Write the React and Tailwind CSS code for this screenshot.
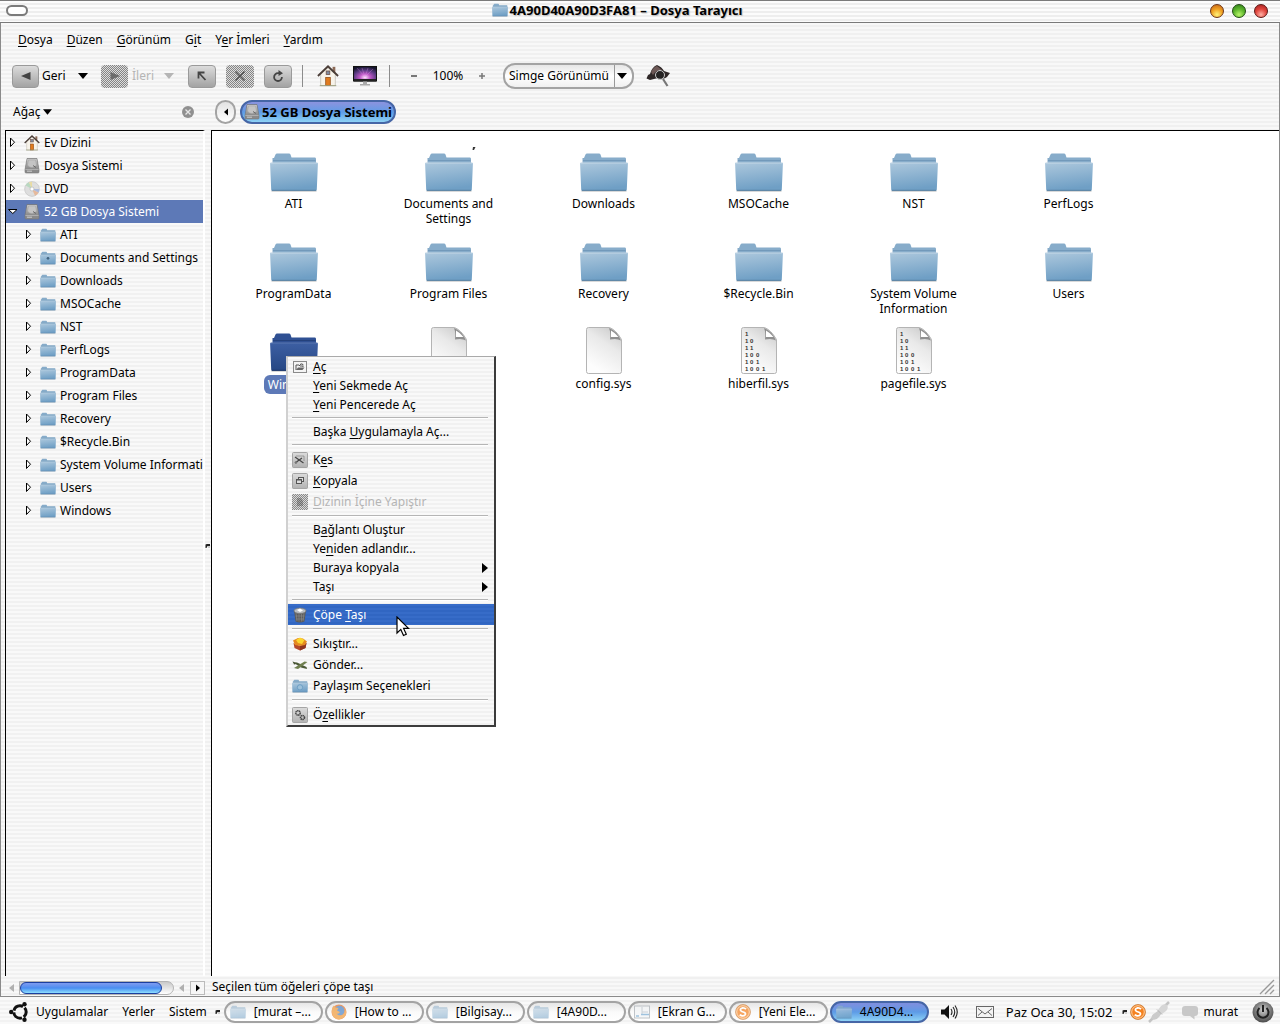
import React, { useState } from "react";

const tree = [
  { name: "Ev Dizini", icon: "home" },
  { name: "Dosya Sistemi", icon: "drive" },
  { name: "DVD", icon: "disc" },
  { name: "52 GB Dosya Sistemi", icon: "drive", open: true },
];

const children = [
  "ATI",
  "Documents and Settings",
  "Downloads",
  "MSOCache",
  "NST",
  "PerfLogs",
  "ProgramData",
  "Program Files",
  "Recovery",
  "$Recycle.Bin",
  "System Volume Information",
  "Users",
  "Windows",
];

const files = [
  { name: "ATI", type: "folder" },
  { name: "Documents and Settings", type: "folder" },
  { name: "Downloads", type: "folder" },
  { name: "MSOCache", type: "folder" },
  { name: "NST", type: "folder" },
  { name: "PerfLogs", type: "folder" },
  { name: "ProgramData", type: "folder" },
  { name: "Program Files", type: "folder" },
  { name: "Recovery", type: "folder" },
  { name: "$Recycle.Bin", type: "folder" },
  { name: "System Volume Information", type: "folder" },
  { name: "Users", type: "folder" },
  { name: "Windows", type: "folder", selected: true },
  { name: "", type: "file" },
  { name: "config.sys", type: "file" },
  { name: "hiberfil.sys", type: "binary" },
  { name: "pagefile.sys", type: "binary" },
];

// "_" marks the letter that gets the underline
const contextMenu = [
  { label: "_Aç", icon: "open", short: true },
  { label: "_Yeni Sekmede Aç", short: true },
  { label: "_Yeni Pencerede Aç", short: true },
  null,
  { label: "Başka _Uygulamayla Aç...", short: true },
  null,
  { label: "K_es", icon: "cut" },
  { label: "_Kopyala", icon: "copy" },
  { label: "_Dizinin İçine Yapıştır", icon: "paste", disabled: true },
  null,
  { label: "B_ağlantı Oluştur", short: true },
  { label: "Ye_niden adlandır...", short: true },
  { label: "Buraya kopyala", short: true, submenu: true },
  { label: "Taşı", short: true, submenu: true },
  null,
  { label: "Çöpe _Taşı", icon: "trash", active: true },
  null,
  { label: "Sıkıştır...", icon: "box" },
  { label: "Gönder...", icon: "plane" },
  { label: "Paylaşım Seçenekleri", icon: "share" },
  null,
  { label: "Ö_zellikler", icon: "gears" },
];

const tasks = [
  { label: "[murat –...", icon: "folder" },
  { label: "[How to ...", icon: "firefox" },
  { label: "[Bilgisay...", icon: "folder" },
  { label: "[4A90D...", icon: "folder" },
  { label: "[Ekran G...", icon: "shot" },
  { label: "[Yeni Ele...", icon: "s" },
  { label: "4A90D4...", icon: "folder", active: true },
];

const Mnemonic = ({ text }) => {
  const i = text.indexOf("_");
  if (i < 0) return <span>{text}</span>;
  return (
    <span>
      {text.slice(0, i)}
      <span className="underline underline-offset-2">{text[i + 1]}</span>
      {text.slice(i + 2)}
    </span>
  );
};

const Gradients = () => (
  <svg className="absolute w-0 h-0" aria-hidden="true">
    <defs>
      <linearGradient id="front" x1="0" y1="0" x2="0.2" y2="1">
        <stop offset="0" stopColor="#adc8dd" />
        <stop offset="1" stopColor="#6f9fc5" />
      </linearGradient>
      <linearGradient id="frontDark" x1="0" y1="0" x2="0" y2="1">
        <stop offset="0" stopColor="#3d5fa3" />
        <stop offset="1" stopColor="#264784" />
      </linearGradient>
      <linearGradient id="page" x1="1" y1="0" x2="0.5" y2="1">
        <stop offset="0" stopColor="#c4c4c4" />
        <stop offset="0.45" stopColor="#e9e9e9" />
        <stop offset="1" stopColor="#fdfdfd" />
      </linearGradient>
      <linearGradient id="metal" x1="0" y1="0" x2="0" y2="1">
        <stop offset="0" stopColor="#c9c9c9" />
        <stop offset="1" stopColor="#8a8a8a" />
      </linearGradient>
      <radialGradient id="aurora" cx="0.5" cy="0.75" r="0.75">
        <stop offset="0" stopColor="#ffe3ff" />
        <stop offset="0.3" stopColor="#c159c8" />
        <stop offset="0.65" stopColor="#5b3a83" />
        <stop offset="1" stopColor="#15142c" />
      </radialGradient>
      <radialGradient id="power" cx="0.5" cy="0.4" r="0.6">
        <stop offset="0" stopColor="#d0d0d0" />
        <stop offset="0.6" stopColor="#7e7e7e" />
        <stop offset="1" stopColor="#4a4a4a" />
      </radialGradient>
    </defs>
  </svg>
);

const Folder = ({ className, dark, viewBox = "0 0 48 48", children }) => (
  <svg className={className} viewBox={viewBox} preserveAspectRatio="none" aria-hidden="true">
    <path d="M1.5 43.5H46.5V45H1.5Z" fill="#000" opacity="0.15" />
    <path
      d="M2.5 18V11H4L5.5 7.5Q6 6.5 7 6.5H19Q20 6.5 20.5 7.5L21.5 10.5H45Q46 10.5 46 12V18Z"
      fill={dark ? "#2f5093" : "#87acca"}
    />
    <path d="M3 13.5H45.5" stroke={dark ? "#24417b" : "#7299ba"} strokeWidth="1" />
    <path
      d="M1 15.5H47Q48 15.5 47.9 17L46.8 42.5Q46.7 43.7 45.5 43.7H2.5Q1.3 43.7 1.2 42.5L0.1 17Q0 15.5 1 15.5Z"
      fill={dark ? "url(#frontDark)" : "url(#front)"}
    />
    <path d="M1 16H47" stroke="#fff" strokeWidth="1" opacity={dark ? 0.15 : 0.35} />
    <path d="M1.8 43.3H46.2" stroke={dark ? "#1b3566" : "#557d9e"} strokeWidth="1" />
    {children}
  </svg>
);

const digitRows = ["1", "10", "11", "100", "101", "1001"];

const Page = ({ binary }) => (
  <svg className="w-12 h-12" viewBox="0 0 48 48" aria-hidden="true">
    <path
      d="M6.5 2.5Q6.5 0.5 8.5 0.5H29.5Q36 3 41.5 12.5V44.5Q41.5 46.5 39.5 46.5H8.5Q6.5 46.5 6.5 44.5Z"
      fill="url(#page)"
      stroke="#b4b4b4"
    />
    <path d="M29 1Q31 6 30 12.5Q37 11 41 13.5Q37 4 29 1Z" fill="#777" opacity="0.75" />
    <path d="M31 3.5V10H38.5Q35.5 6 31 3.5Z" fill="#fff" />
    {binary && (
      <g fontFamily="Liberation Sans, sans-serif" fontWeight="700" fontSize="6" fill="#333">
        {digitRows.map((row, i) => (
          <text key={i} x="10 15 21 27" y={9 + i * 7}>
            {row}
          </text>
        ))}
      </g>
    )}
  </svg>
);

const House = ({ className }) => (
  <svg className={className} viewBox="0 0 24 24" aria-hidden="true">
    <path d="M17 2H20V9H17Z" fill="#8c6b58" />
    <path d="M4 10L12 3L20 10V22.5H4Z" fill="#f7f3ea" stroke="#b9b2a6" strokeWidth="0.7" />
    <path d="M1 12L12 1.5L23 12" fill="none" stroke="#4a3d37" strokeWidth="2" />
    <rect x="10" y="6.5" width="4" height="4" fill="#7f8aa0" stroke="#6b4b3c" strokeWidth="0.8" />
    <rect x="9.5" y="13.5" width="5" height="9" fill="#e07b1e" stroke="#8d4a14" strokeWidth="0.8" />
    <path d="M3 22.5H21" stroke="#9aa07f" strokeWidth="1" />
  </svg>
);

const Drive = ({ className }) => (
  <svg className={className} viewBox="0 0 16 16" aria-hidden="true">
    <path d="M3 0.5H13L15 11.5V14Q15 15 14 15H2Q1 15 1 14V11.5Z" fill="#8a8a8a" stroke="#777" strokeWidth="0.6" />
    <path d="M3.3 1H12.7L14.3 11H1.7Z" fill="url(#metal)" />
    <path d="M4.5 2H11.5L12.5 7Q11 9.5 8 9.5Q5 9.5 3.5 7Z" fill="#c4c4c4" stroke="#a0a0a0" strokeWidth="0.5" />
    <path d="M9 7.5L12 9.5" stroke="#6a6a6a" strokeWidth="1" />
    <path d="M1.4 11.5H14.6" stroke="#bdbdbd" strokeWidth="0.7" />
    <path d="M3 13.2H8" stroke="#ddd" strokeWidth="0.8" />
  </svg>
);

const Disc = ({ className }) => (
  <svg className={className} viewBox="0 0 16 16" aria-hidden="true">
    <circle cx="8" cy="8" r="7.4" fill="#dedede" stroke="#c0c0c0" strokeWidth="0.6" />
    <path d="M8 8L1.5 4.5A7.3 7.3 0 0 1 5 1.3Z" fill="#b9d8c0" />
    <path d="M8 8L5 1.3A7.3 7.3 0 0 1 8 0.8Z" fill="#e9dca4" />
    <path d="M8 8L14.5 11.5A7.3 7.3 0 0 1 11 14.7Z" fill="#e6b99b" />
    <path d="M8 8L15.3 8A7.3 7.3 0 0 1 14.5 11.5Z" fill="#aab9dd" />
    <circle cx="8" cy="8" r="2" fill="#fff" stroke="#b0b0b0" strokeWidth="0.6" />
  </svg>
);

const TreeIcon = ({ type }) => {
  if (type === "home") return <House className="w-4 h-4 shrink-0" />;
  if (type === "drive") return <Drive className="w-4 h-4 shrink-0" />;
  return <Disc className="w-4 h-4 shrink-0" />;
};

const Expander = ({ open }) => (
  <svg className="w-3 h-3 shrink-0" viewBox="0 0 12 12" aria-hidden="true">
    {open ? (
      <path d="M2.5 3.500H11L6.800 7.500Z" fill="#fff" stroke="#000" strokeWidth="1" />
    ) : (
      <path d="M4.500 1V9.500L8.500 5.200Z" fill="#fff" stroke="#000" strokeWidth="1" />
    )}
  </svg>
);

const Tile = ({ children }) => (
  <>
    <rect x="0.5" y="0.5" width="15" height="15" rx="1" fill="url(#metal)" stroke="#a5a5a5" />
    <rect x="1" y="1" width="14" height="14" fill="#fff" opacity="0.35" />
    {children}
  </>
);

const MenuIcon = ({ type }) => {
  if (type === "share")
    return (
      <Folder className="w-4 h-3.5" viewBox="0 4 48 42">
        <circle cx="24" cy="29" r="8" fill="#9cc0da" stroke="#6d9fc5" strokeWidth="3" />
      </Folder>
    );
  if (type === "paste")
    return (
      <span className="relative block w-4 h-4 bg-[repeating-conic-gradient(#8a8a8a_0_25%,#d8d8d8_0_50%)] bg-[length:2px_2px]">
        <svg className="absolute inset-0 w-4 h-4" viewBox="0 0 16 16" aria-hidden="true">
          <path d="M5 4H9L11 7V12H5Z" fill="#333" opacity="0.3" />
        </svg>
      </span>
    );
  return (
    <svg className="w-4 h-4" viewBox="0 0 16 16" aria-hidden="true">
      {type === "open" && (
        <>
          <rect x="1.5" y="2.5" width="13" height="11" fill="#f4f4f4" stroke="#8a8a8a" />
          <path d="M4 11V6H7L8 7H11V8" fill="none" stroke="#555" />
          <path d="M4 11L6 8.5H12.5L10.5 11Z" fill="#666" />
          <path d="M8 5.5Q10 4 11.5 6" fill="none" stroke="#444" />
        </>
      )}
      {type === "cut" && (
        <Tile>
          <path d="M4.5 4H12V9" fill="none" stroke="#666" strokeDasharray="1 1" />
          <path d="M3 5L11.5 11M3 11L10 6" stroke="#444" strokeWidth="1.2" />
          <circle cx="4" cy="10.5" r="1.3" fill="#777" />
        </Tile>
      )}
      {type === "copy" && (
        <Tile>
          <rect x="6.5" y="4.5" width="5" height="4" fill="#ddd" stroke="#555" />
          <rect x="4.5" y="6.5" width="5" height="4" fill="#ddd" stroke="#555" />
          <path d="M4.5 7H9.5" stroke="#555" />
        </Tile>
      )}
      {type === "gears" && (
        <Tile>
          <circle cx="6" cy="6" r="2.2" fill="none" stroke="#444" strokeWidth="1.5" strokeDasharray="1.3 0.4" />
          <circle cx="10.5" cy="10.5" r="2" fill="none" stroke="#444" strokeWidth="1.6" strokeDasharray="1.3 0.4" />
        </Tile>
      )}
      {type === "trash" && (
        <>
          <path d="M2 3.5H14L12.5 14.5Q8 16.5 3.5 14.5Z" fill="#5b5b5b" />
          <path d="M4 6L5 14M7 6.5V14.5M9.5 6.5V14.5M12 6L11 14M3.5 9H12.5M4 12H12" stroke="#8f8f8f" strokeWidth="0.6" />
          <ellipse cx="8" cy="3.8" rx="6" ry="2.7" fill="#b9bdc2" stroke="#777" strokeWidth="0.8" />
          <path d="M5 3L8 1.5L11 3.5L8 5Z" fill="#fff" />
        </>
      )}
      {type === "box" && (
        <>
          <path d="M1.5 7L8 10L14.5 7L13.5 12L8 14.5L2.5 12Z" fill="#b5482a" />
          <path d="M8 10V14.5L13.5 12L14.5 7Z" fill="#8e3420" />
          <path d="M1 4.5L6 2L11 2.5L15 5.5L13 9L8 10L3 9Z" fill="#e58a1f" />
          <path d="M4 4L8 1.5L12.5 4L10 8L6 7Z" fill="#fbd52f" />
        </>
      )}
      {type === "plane" && (
        <>
          <path d="M0.5 5L5 5.5L14.5 10L15 12L9 10.5Z" fill="#4c5a37" />
          <path d="M2 11L12.5 4.5L15.5 5L6 12Z" fill="#6f7f4e" />
          <path d="M0.5 4L4 7L2 7.5Z" fill="#3f4b2e" />
        </>
      )}
    </svg>
  );
};

const SMark = () => (
  <>
    <circle cx="8" cy="8" r="7.5" fill="#f58220" stroke="#b86a24" strokeWidth="0.6" />
    <circle cx="8" cy="8" r="6.3" fill="none" stroke="#ffe2c0" strokeWidth="0.8" />
    <path
      d="M11 5.2Q9.5 3.6 7.3 4Q4.9 4.6 5.6 6.4Q6.2 7.5 8.2 8Q10.8 8.7 10.4 10.3Q9.8 12.2 7.2 11.9Q5.6 11.6 4.8 10.6"
      fill="none"
      stroke="#fff"
      strokeWidth="1.8"
    />
  </>
);

const TaskIcon = ({ type, active }) => {
  if (type === "folder")
    return (
      <Folder
        className={active ? "w-4 h-3.5 shrink-0 opacity-80" : "w-4 h-3.5 shrink-0 opacity-50"}
        viewBox="0 4 48 42"
      />
    );
  return (
    <svg className="w-4 h-4 shrink-0 opacity-70" viewBox="0 0 16 16" aria-hidden="true">
      {type === "firefox" && (
        <>
          <circle cx="8" cy="8" r="7.5" fill="#e8762c" />
          <circle cx="8.5" cy="6.8" r="5" fill="#4f86c6" />
          <path d="M0.8 6Q1 2.5 3 1.5L4.5 3.5L7.5 4L6 6.5L9 8Q8 10.5 5.5 9.5Q8 13 12 10.5Q14.5 8 13.5 4Q17 9 13.5 13Q8 17.5 3 13.5Q0.5 10.5 0.8 6Z" fill="#f09a3a" />
        </>
      )}
      {type === "shot" && (
        <>
          <rect x="0.5" y="2" width="15" height="12" fill="#f3f5f7" stroke="#a7adb3" />
          <path d="M8 3V10M8 8H14" stroke="#b8c0c8" />
          <path d="M7 10.5H15M2 12H5" stroke="#78abd2" strokeWidth="1.5" />
        </>
      )}
      {type === "s" && <SMark />}
    </svg>
  );
};

const ToolButton = ({ label, disabled, narrow, children }) => (
  <button
    aria-label={label}
    disabled={disabled}
    className={
      "h-[23px] flex items-center justify-center rounded-sm " +
      (narrow ? "w-[27px] " : "w-7 ") +
      (disabled
        ? "bg-[repeating-conic-gradient(#858585_0_25%,#dcdcdc_0_50%)] bg-[length:2px_2px]"
        : "border border-[#9a9a9a] bg-linear-to-b from-[#dcdcdc] to-[#a3a3a3]")
    }
  >
    {children}
  </button>
);

const Caret = ({ className, color = "#000" }) => (
  <svg className={className} viewBox="0 0 10 6" aria-hidden="true">
    <path d="M0 0H10L5 6Z" fill={color} />
  </svg>
);

const Grip = ({ className }) => (
  <svg className={className} viewBox="0 0 6 6" aria-hidden="true">
    <path d="M0.5 1.5Q1 1 2 1H5V3H2.5L1.5 5H0.5Z" fill="#222" />
    <path d="M3 3H5V5H3Z" fill="#ccc" />
  </svg>
);

const TitleBar = () => (
  <header className="h-[23px] px-1.5 pb-0.5 flex items-center border-y border-[#7a7a7a] bg-[repeating-linear-gradient(#fcfcfc_0_2px,#eeeeee_2px_4px)]">
    <button aria-label="Pencere menüsü" className="w-[22px] h-[11px] rounded-full border-2 border-[#7b7b7b] bg-white" />
    <h1 className="flex-1 flex items-center justify-center pr-1 pb-0.5 text-[13px] leading-4 font-bold text-shadow-[1px_1px_1px_#bbbbbb]">
      <Folder className="w-4 h-3.5 mr-0.5" viewBox="0 4 48 42" />
      4A90D40A90D3FA81 – Dosya Tarayıcı
    </h1>
    <div className="flex gap-2 pr-1.5">
      <button aria-label="Küçült" className="w-3.5 h-3.5 rounded-full border border-[#6d3414] bg-[radial-gradient(circle_at_50%_80%,#fff27a,#f0a021_50%,#c0601a)]" />
      <button aria-label="Büyüt" className="w-3.5 h-3.5 rounded-full border border-[#1f4a12] bg-[radial-gradient(circle_at_50%_80%,#b8f56a,#5cb52c_50%,#2d7a1a)]" />
      <button aria-label="Kapat" className="w-3.5 h-3.5 rounded-full border border-[#5d1714] bg-[radial-gradient(circle_at_50%_80%,#ffb0a4,#e0443c_50%,#a02020)]" />
    </div>
  </header>
);

const MenuBar = () => (
  <nav className="flex gap-3.5 px-3.5 py-2 leading-[18px]">
    {["_Dosya", "_Düzen", "_Görünüm", "G_it", "Y_er İmleri", "_Yardım"].map((m) => (
      <button key={m}>
        <Mnemonic text={m} />
      </button>
    ))}
  </nav>
);

const Toolbar = () => {
  const [view, setView] = useState("Simge Görünümü");

  return (
    <div className="flex items-center h-[38px] pl-2">
      <ToolButton label="Geri git" narrow>
        <svg className="w-3 h-3" viewBox="0 0 12 12" aria-hidden="true">
          <path d="M10.5 2V10L1 6Z" fill="#444" />
        </svg>
      </ToolButton>
      <button className="ml-[3px] w-9 text-left">Geri</button>
      <button aria-label="Geri geçmişi">
        <Caret className="w-2.5 h-1.5" />
      </button>
      <div className="w-[13px]" />
      <ToolButton label="İleri git" disabled narrow>
        <svg className="w-3 h-3" viewBox="0 0 12 12" aria-hidden="true">
          <path d="M1.5 2V10L11 6Z" fill="#6c6c6c" />
        </svg>
      </ToolButton>
      <button disabled className="ml-1 w-8 text-left text-[#b5b5b5]">
        İleri
      </button>
      <button aria-label="İleri geçmişi" disabled>
        <Caret className="w-2.5 h-1.5" color="#b5b5b5" />
      </button>
      <div className="flex gap-2.5 ml-3.5">
        <ToolButton label="Yukarı">
          <svg className="w-3 h-3" viewBox="0 0 12 12" aria-hidden="true">
            <path d="M2.5 8.5V2.5H8.5M3 3L9.5 10" fill="none" stroke="#444" strokeWidth="1.8" />
          </svg>
        </ToolButton>
        <ToolButton label="Durdur" disabled>
          <svg className="w-3 h-3" viewBox="0 0 12 12" aria-hidden="true">
            <path d="M1.5 1.5L10.5 10.5M10.5 1.5L1.5 10.5" stroke="#555" strokeWidth="1.6" />
          </svg>
        </ToolButton>
        <ToolButton label="Yenile">
          <svg className="w-3 h-3" viewBox="0 0 12 12" aria-hidden="true">
            <path d="M8 3.2H6A3.9 3.9 0 1 0 9.9 7" fill="none" stroke="#444" strokeWidth="1.8" />
            <path d="M6.5 0L11 3.2L6.5 6Z" fill="#444" />
          </svg>
        </ToolButton>
      </div>
      <div className="w-px h-[22px] ml-2.5 mr-3.5 bg-[#8c8c8c]" />
      <button aria-label="Ev">
        <House className="w-[22px] h-6" />
      </button>
      <button aria-label="Bilgisayar" className="ml-3.5">
        <svg className="w-6 h-5" viewBox="0 0 24 20" aria-hidden="true">
          <rect x="0.5" y="0.5" width="23" height="14.5" fill="url(#aurora)" stroke="#111" />
          <path d="M12 11L4 2M12 11L9 2M12 11L15 2M12 11L20 3" stroke="#e9a3f0" strokeWidth="0.7" opacity="0.4" />
          <path d="M1 13H23V15.5H1Z" fill="#222" />
          <path d="M10 15.5H14V18H17V19.5H7V18H10Z" fill="#aaa" />
        </svg>
      </button>
      <div className="w-px h-[22px] ml-3 mr-4 bg-[#8c8c8c]" />
      <button aria-label="Uzaklaştır" className="w-4 flex justify-center">
        <svg className="w-2 h-2" viewBox="0 0 8 8" aria-hidden="true">
          <path d="M1 4H7" stroke="#777" strokeWidth="2" />
        </svg>
      </button>
      <span className="w-[52px] text-center">100%</span>
      <button aria-label="Yakınlaştır" className="w-4 flex justify-center">
        <svg className="w-2 h-2" viewBox="0 0 8 8" aria-hidden="true">
          <path d="M1 4H7M4 1V7" stroke="#777" strokeWidth="1.5" />
        </svg>
      </button>
      <div className="relative ml-[13px]">
        <select
          aria-label="Görünüm türü"
          value={view}
          onChange={(e) => setView(e.target.value)}
          className="appearance-none w-[131px] h-[26px] pl-1 rounded-xl border-2 border-[#a3a3a3] bg-linear-to-b from-[#e6e6e6] via-white to-[#f0f0f0]"
        >
          <option>Simge Görünümü</option>
          <option>Liste Görünümü</option>
        </select>
        <div className="absolute right-0 inset-y-0.5 w-5 flex items-center border-l border-[#999] pointer-events-none">
          <Caret className="w-2.5 h-1.5 ml-0.5" />
        </div>
      </div>
      <button aria-label="Ara" className="ml-3">
        <svg className="w-6 h-6" viewBox="0 0 24 24" aria-hidden="true">
          <path d="M0.5 14.5L2 11L4 10Q6 3 11 1Q16 3 18 7L24 9L21 13Q18 16 12 14L4 16Z" fill="#2e2727" />
          <path d="M5 8Q8 2.5 11 2L16 6Q10 6 7 11Z" fill="#6d5856" />
          <circle cx="14" cy="11" r="4.5" fill="#222" fillOpacity="0.7" stroke="#c9c9c9" strokeWidth="1" />
          <path d="M17 15L21.5 22" stroke="#777" strokeWidth="2.2" />
        </svg>
      </button>
    </div>
  );
};

const Sidebar = () => (
  <aside className="w-[200px] shrink-0 flex flex-col">
    <div className="flex items-center justify-between h-[35px] pl-2 pr-[11px] pb-0.5">
      <button className="flex items-center gap-0.5">
        Ağaç
        <Caret className="w-[9px] h-1.5" />
      </button>
      <button aria-label="Kenar çubuğunu kapat">
        <svg className="w-3 h-3" viewBox="0 0 12 12" aria-hidden="true">
          <circle cx="6" cy="6" r="6" fill="#909090" />
          <path d="M3.5 3.5L8.5 8.5M8.5 3.5L3.5 8.5" stroke="#e6e6e6" strokeWidth="1.3" />
        </svg>
      </button>
    </div>
    <ul className="flex-1 min-h-0 overflow-hidden border-t border-l border-black border-r-2 border-r-white bg-[repeating-linear-gradient(#f9f9f9_0_2px,#f1f1f1_2px_4px)]">
      {tree.map((t) => (
        <li
          key={t.name}
          className={
            t.open
              ? "flex items-center h-[23px] bg-[#5d79b7] text-white whitespace-nowrap"
              : "flex items-center h-[23px] whitespace-nowrap"
          }
        >
          <Expander open={t.open} />
          <span className="ml-1.5 mr-1">
            <TreeIcon type={t.icon} />
          </span>
          {t.name}
        </li>
      ))}
      {children.map((name) => (
        <li key={name} className="flex items-center h-[23px] pl-4 whitespace-nowrap">
          <Expander />
          <Folder className="w-4 h-3.5 ml-1.5 mr-1 shrink-0" viewBox="0 4 48 42">
            {name === "Documents and Settings" && <circle cx="24" cy="26" r="4" fill="#41637f" />}
          </Folder>
          {name}
        </li>
      ))}
    </ul>
    <div className="h-5 flex items-center pt-1">
      <button aria-label="Sola kaydır" disabled className="w-3.5 flex justify-center">
        <svg className="w-1.5 h-2" viewBox="0 0 6 8" aria-hidden="true">
          <path d="M5 0V8L0 4Z" fill="#b0b0b0" />
        </svg>
      </button>
      <div className="flex-1 h-3.5 rounded-r-full border border-[#b4b4b4] bg-linear-to-b from-[#c9c9c9] to-white">
        <div className="w-[142px] h-3 rounded-full border border-[#1b3fa0] bg-linear-to-b from-[#7f9bf0] via-[#4a8df0] to-[#8fe0ff]" />
      </div>
      <button aria-label="Geri kaydır" disabled className="w-4 flex justify-center">
        <svg className="w-1.5 h-2" viewBox="0 0 6 8" aria-hidden="true">
          <path d="M5 0V8L0 4Z" fill="#b0b0b0" />
        </svg>
      </button>
      <button aria-label="Sağa kaydır" className="w-[15px] h-3.5 flex items-center justify-center border border-[#bbb] bg-[#f6f6f6]">
        <svg className="w-1.5 h-2" viewBox="0 0 6 8" aria-hidden="true">
          <path d="M1 0.5V7.5L5 4Z" fill="#000" />
        </svg>
      </button>
    </div>
  </aside>
);

const FileItem = ({ file }) => (
  <li className="flex flex-col items-center">
    {file.type === "folder" ? (
      <Folder className="w-12 h-12" dark={file.selected} />
    ) : (
      <Page binary={file.type === "binary"} />
    )}
    <span
      className={
        file.selected
          ? "px-1 py-0.5 rounded-md bg-[#5d79b7] text-white leading-[15px]"
          : "max-w-28 mt-px text-center leading-[15px]"
      }
    >
      {file.name}
    </span>
  </li>
);

const ContextMenu = () => (
  <div
    role="menu"
    className="absolute left-[74px] top-[225px] w-[210px] border-t border-l-2 border-t-[#aaa] border-l-[#d0d0d0] border-r-2 border-b-2 border-r-[#3c3c3c] border-b-[#3c3c3c] bg-[repeating-linear-gradient(#f9f9f9_0_2px,#f1f1f1_2px_4px)]"
  >
    {contextMenu.map((item, i) =>
      item ? (
        <button
          key={item.label}
          role="menuitem"
          disabled={item.disabled}
          className={
            "flex items-center w-full pl-1 text-left " +
            (item.short ? "h-[19px] " : "h-[21px] ") +
            (item.active ? "bg-[repeating-linear-gradient(#376cc8_0_2px,#3166c2_2px_4px)] text-white " : "") +
            (item.disabled ? "text-[#b5b5b5]" : "")
          }
        >
          <span className="w-[21px] shrink-0">{item.icon && <MenuIcon type={item.icon} />}</span>
          <Mnemonic text={item.label} />
          {item.submenu && (
            <svg className="w-1.5 h-2.5 ml-auto mr-1.5" viewBox="0 0 6 10" aria-hidden="true">
              <path d="M0 0V10L6 5Z" fill="#000" />
            </svg>
          )}
        </button>
      ) : (
        <div key={i} role="separator" className="h-2 pt-[3px] pl-1 pr-1.5">
          <div className="h-0.5 border-t border-[#b5b5b5] bg-white" />
        </div>
      )
    )}
    <svg className="absolute left-[108px] top-[259px] w-3.5 h-[22px]" viewBox="0 0 14 22" aria-hidden="true">
      <path d="M1 1V17L4.8 13.4L7.5 19.5L10.3 18.3L7.6 12.4H12.5Z" fill="#fff" stroke="#000" strokeWidth="1.2" />
    </svg>
  </div>
);

const MainPane = () => (
  <main className="flex-1 min-w-0 flex flex-col">
    <div className="flex items-center h-[35px] pl-1 pb-0.5">
      <button
        aria-label="Önceki konum"
        className="w-[21px] h-6 flex items-center justify-center rounded-full border-2 border-[#a3a3a3] bg-linear-to-b from-[#e2e2e2] to-white"
      >
        <svg className="w-1 h-2" viewBox="0 0 4 8" aria-hidden="true">
          <path d="M4 0.5V7.5L0 4Z" fill="#000" />
        </svg>
      </button>
      <button className="ml-1 h-6 px-0.5 flex items-center rounded-xl border-2 border-[#4666a6] bg-linear-to-b from-[#8b93de] via-[#5d9be6] to-[#8fd3f5] text-[13px] font-bold">
        <Drive className="w-4 h-4 mr-0.5" />
        52 GB Dosya Sistemi
      </button>
    </div>
    <div className="relative flex-1 min-h-0 border-t border-l border-black bg-white">
      <ul className="grid grid-cols-[repeat(auto-fill,155px)] auto-rows-[90px] pl-1 pt-4">
        {files.map((f, i) => (
          <FileItem key={i} file={f} />
        ))}
      </ul>
      <svg className="absolute left-[260px] top-4 w-1 h-1" viewBox="0 0 4 4" aria-hidden="true">
        <path d="M1 0H3.5L2 3H0.5Z" fill="#333" />
      </svg>
      <ContextMenu />
    </div>
    <footer className="h-5 flex items-center justify-between pl-px pt-0.5 pr-1">
      <span>Seçilen tüm öğeleri çöpe taşı</span>
      <svg className="w-4 h-4" viewBox="0 0 16 16" aria-hidden="true">
        <path d="M1 15L15 1M6 15L15 6M11 15L15 11" stroke="#999" strokeWidth="1.3" />
      </svg>
    </footer>
  </main>
);

const Taskbar = () => (
  <div className="h-[27px] shrink-0 flex items-center pl-2 pr-1.5 pt-0.5 border-t border-[#f8f8f8] bg-[repeating-linear-gradient(#f9f9f9_0_2px,#f2f2f2_2px_4px)]">
    <svg className="w-[22px] h-[22px] mr-1.5" viewBox="0 0 22 22" aria-hidden="true">
      <circle cx="12" cy="11" r="6.2" fill="none" stroke="#111" strokeWidth="3" strokeDasharray="11.2 1.8" strokeDashoffset="5.6" />
      <circle cx="3.2" cy="11" r="2.2" fill="#111" />
      <circle cx="16.5" cy="3.2" r="2.2" fill="#111" />
      <circle cx="16.5" cy="18.8" r="2.2" fill="#111" />
    </svg>
    <nav className="flex gap-3.5">
      <button>Uygulamalar</button>
      <button>Yerler</button>
      <button>Sistem</button>
    </nav>
    <Grip className="w-1.5 h-1.5 ml-2 mr-[3px]" />
    <div className="flex gap-0.5">
      {tasks.map((t) => (
        <button
          key={t.label}
          className={
            t.active
              ? "w-[99px] h-[22px] pl-1 flex items-center rounded-full border-2 border-[#4666a6] bg-linear-to-b from-[#7f8ede] via-[#5d9be6] to-[#8fd3f5] whitespace-nowrap"
              : "w-[99px] h-[22px] pl-1 flex items-center rounded-full border-2 border-[#a3a3a3] bg-linear-to-b from-[#e6e6e6] via-[#fafafa] to-white whitespace-nowrap"
          }
        >
          <TaskIcon type={t.icon} active={t.active} />
          <span className="ml-2">{t.label}</span>
        </button>
      ))}
    </div>
    <svg className="w-[17px] h-4 ml-3" viewBox="0 0 17 16" aria-hidden="true">
      <path d="M0 5.5H3.5L8 1V15L3.5 10.5H0Z" fill="#111" />
      <path d="M10 5Q12 8 10 11M12 3Q15.5 8 12 13M14 1.5Q18.5 8 14 14.5" fill="none" stroke="#222" strokeWidth="1.1" />
    </svg>
    <svg className="w-[18px] h-3 ml-[18px]" viewBox="0 0 18 12" aria-hidden="true">
      <rect x="0.5" y="0.5" width="17" height="11" fill="#f4f4f4" stroke="#666" />
      <path d="M2 2.5L9 8L16 2.5M2 9.5L6 6M16 9.5L12 6" fill="none" stroke="#666" />
    </svg>
    <time className="ml-3 text-[13px]">Paz Oca 30, 15:02</time>
    <Grip className="w-1.5 h-1.5 ml-auto mr-0.5" />
    <svg className="w-4 h-4" viewBox="0 0 16 16" aria-hidden="true">
      <SMark />
    </svg>
    <svg className="w-[22px] h-[22px] ml-0.5 mr-3" viewBox="0 0 22 22" aria-hidden="true">
      <path d="M1 21L5 17M17 5L21 1" stroke="#c4c4c4" strokeWidth="2.5" />
      <path d="M3.5 18Q3 14 7 12L11 9L14 12L11 16Q8 20 3.5 18Z" fill="#cbcbcb" />
      <path d="M10 9L13 5Q16 2 19 4Q21 7 18 10L14 13Z" fill="#d6d6d6" />
      <path d="M9 8.5L14 13.5" stroke="#b5b5b5" />
    </svg>
    <span className="flex items-center gap-1.5">
      <svg className="w-4 h-4" viewBox="0 0 16 16" aria-hidden="true">
        <path d="M3 2H13Q16 2 16 5V9Q16 12 13 12H12.5V15.5L8 12H3Q0 12 0 9V5Q0 2 3 2Z" fill="#c8c8c8" />
      </svg>
      murat
    </span>
    <button aria-label="Oturumu kapat" className="ml-3.5">
      <svg className="w-[22px] h-[22px]" viewBox="0 0 22 22" aria-hidden="true">
        <circle cx="11" cy="11" r="10.5" fill="url(#power)" />
        <path d="M7.5 7A5.5 5.5 0 1 0 14.5 7M11 4V11" fill="none" stroke="#222" strokeWidth="2" />
      </svg>
    </button>
  </div>
);

const App = () => (
  <div className="h-screen flex flex-col overflow-hidden font-['Noto_Sans',sans-serif] text-[12px] leading-4 text-black bg-[#ededed]">
    <Gradients />
    <div className="flex-1 min-h-0 flex flex-col">
      <TitleBar />
      <div className="flex-1 min-h-0 flex flex-col pl-[3px] border-x border-b border-[#8a8a8a] bg-[repeating-linear-gradient(#f8f8f8_0_2px,#f0f0f0_2px_4px)]">
        <MenuBar />
        <Toolbar />
        <div className="flex-1 min-h-0 flex pl-px">
          <Sidebar />
          <div className="w-1.5 shrink-0 flex items-center">
            <Grip className="w-1.5 h-1.5" />
          </div>
          <MainPane />
        </div>
      </div>
    </div>
    <Taskbar />
  </div>
);

export default App;
